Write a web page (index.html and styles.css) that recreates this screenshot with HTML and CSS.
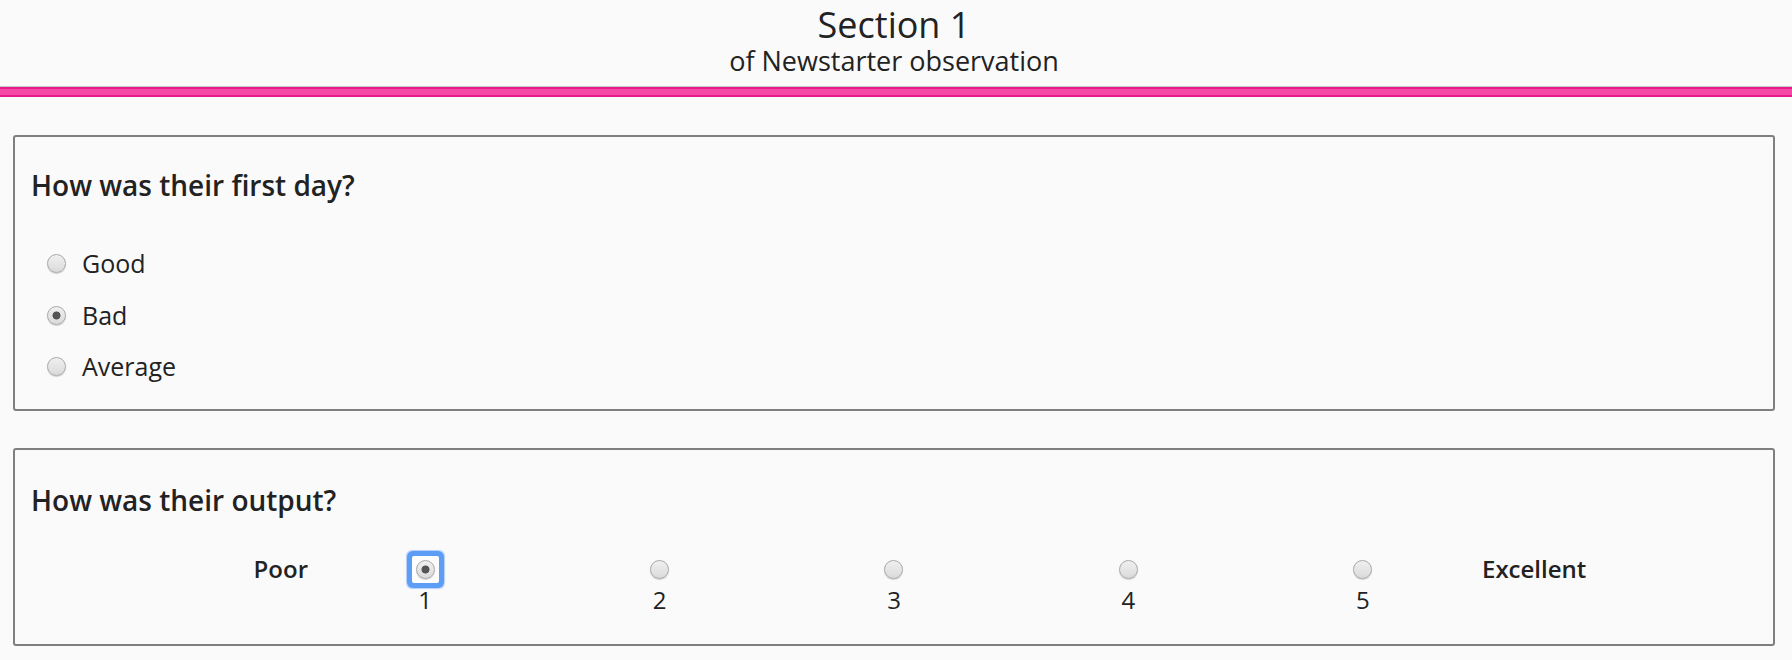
FILE: index.html
```html
<!DOCTYPE html>
<html lang="en">
<head>
<meta charset="utf-8">
<title>Section 1 - Newstarter observation</title>
<link rel="stylesheet" href="styles.css">
</head>
<body>
<header class="page-header">
  <div class="titles">
    <h1 class="title">Section 1</h1>
    <p class="subtitle">of Newstarter observation</p>
  </div>
  <div class="hairline"></div>
  <div class="rule"></div>
</header>
<main class="content">
  <section class="card">
    <h2 class="question">How was their first day?</h2>
    <div class="options">
      <label class="option"><span class="radio-wrap"><input class="radio" type="radio" name="q1"></span><span>Good</span></label>
      <label class="option"><span class="radio-wrap"><input class="radio" type="radio" name="q1" checked></span><span>Bad</span></label>
      <label class="option"><span class="radio-wrap"><input class="radio" type="radio" name="q1"></span><span>Average</span></label>
    </div>
  </section>
  <section class="card card-scale">
    <h2 class="question">How was their output?</h2>
    <div class="scale">
      <div class="scale-label scale-left">Poor</div>
      <label class="scale-item"><span class="radio-wrap focused"><input class="radio" type="radio" name="q2" checked></span><span class="num">1</span></label>
      <label class="scale-item"><span class="radio-wrap"><input class="radio" type="radio" name="q2"></span><span class="num">2</span></label>
      <label class="scale-item"><span class="radio-wrap"><input class="radio" type="radio" name="q2"></span><span class="num">3</span></label>
      <label class="scale-item"><span class="radio-wrap"><input class="radio" type="radio" name="q2"></span><span class="num">4</span></label>
      <label class="scale-item"><span class="radio-wrap"><input class="radio" type="radio" name="q2"></span><span class="num">5</span></label>
      <div class="scale-label scale-right">Excellent</div>
    </div>
  </section>
</main>
</body>
</html>
```
FILE: styles.css
```css
* { box-sizing: border-box; }

body {
  margin: 0;
  background: #fafafa;
  color: #222;
  font-family: "Open Sans", "Noto Sans", "Liberation Sans", sans-serif;
}

.page-header {
  padding-top: 5px;
}

.titles {
  text-align: center;
  padding: 0 17px 10px 13px;
}

.title {
  margin: 0;
  font-size: 36px;
  font-weight: 500;
  line-height: 40px;
}

.subtitle {
  margin: 1px 0 0;
  font-size: 27px;
  line-height: 30px;
}

.hairline {
  height: 1px;
  background: #c6c6c6;
}

.rule {
  height: 10px;
  background: #f44aa5;
  border-top: 2px solid #e8198b;
  border-bottom: 2px solid #e8198b;
}

.content {
  padding: 38px 17px 0 13px;
  display: flex;
  flex-direction: column;
  gap: 37px;
}

.card {
  border: 2px solid #7f7f7f;
  border-radius: 3px;
  padding: 29px 16px 26px;
}

.card-scale {
  padding-top: 31px;
}

.question {
  margin: 0;
  font-size: 28px;
  font-weight: 600;
  line-height: 38px;
}

.options {
  margin-top: 43px;
  padding-left: 16px;
  display: flex;
  flex-direction: column;
  gap: 18.5px;
}

.option {
  display: flex;
  align-items: center;
  gap: 16px;
  font-size: 25px;
  line-height: 33px;
}

.radio-wrap {
  position: relative;
  display: block;
  width: 19px;
  height: 19px;
  flex: none;
}

.radio {
  -webkit-appearance: none;
  appearance: none;
  display: block;
  margin: 0;
  width: 19px;
  height: 19px;
  border-radius: 50%;
  border: 1px solid #a9a9a9;
  background: linear-gradient(to bottom, #f0f0f0, #dadada);
  box-shadow: 0 1px 1px rgba(0, 0, 0, 0.18);
  outline: none;
}

.radio:checked {
  background:
    radial-gradient(circle, #555 0, #555 3.6px, transparent 4.4px),
    linear-gradient(to bottom, #f0f0f0, #dadada);
}

.radio-wrap.focused::before {
  content: "";
  position: absolute;
  inset: -4px;
  border-radius: 2px;
  background: #fdfdfd;
  box-shadow: 0 0 0 5px #5e9df6, 0 0 1px 6px rgba(94, 157, 246, 0.45);
}

.radio-wrap.focused .radio {
  position: relative;
}

.scale {
  margin-top: 33px;
  margin-bottom: 2px;
  display: grid;
  grid-template-columns: 277px repeat(5, 1fr) 277px;
  align-items: start;
}

.scale-label {
  font-size: 24px;
  font-weight: 600;
  line-height: 33px;
}

.scale-left {
  text-align: right;
}

.scale-right {
  text-align: left;
  padding-left: 2px;
}

.scale-item {
  display: flex;
  flex-direction: column;
  align-items: center;
}

.scale-item .radio-wrap {
  margin-top: 8px;
}

.num {
  margin-top: 4px;
  font-size: 24px;
  line-height: 33px;
}
```
